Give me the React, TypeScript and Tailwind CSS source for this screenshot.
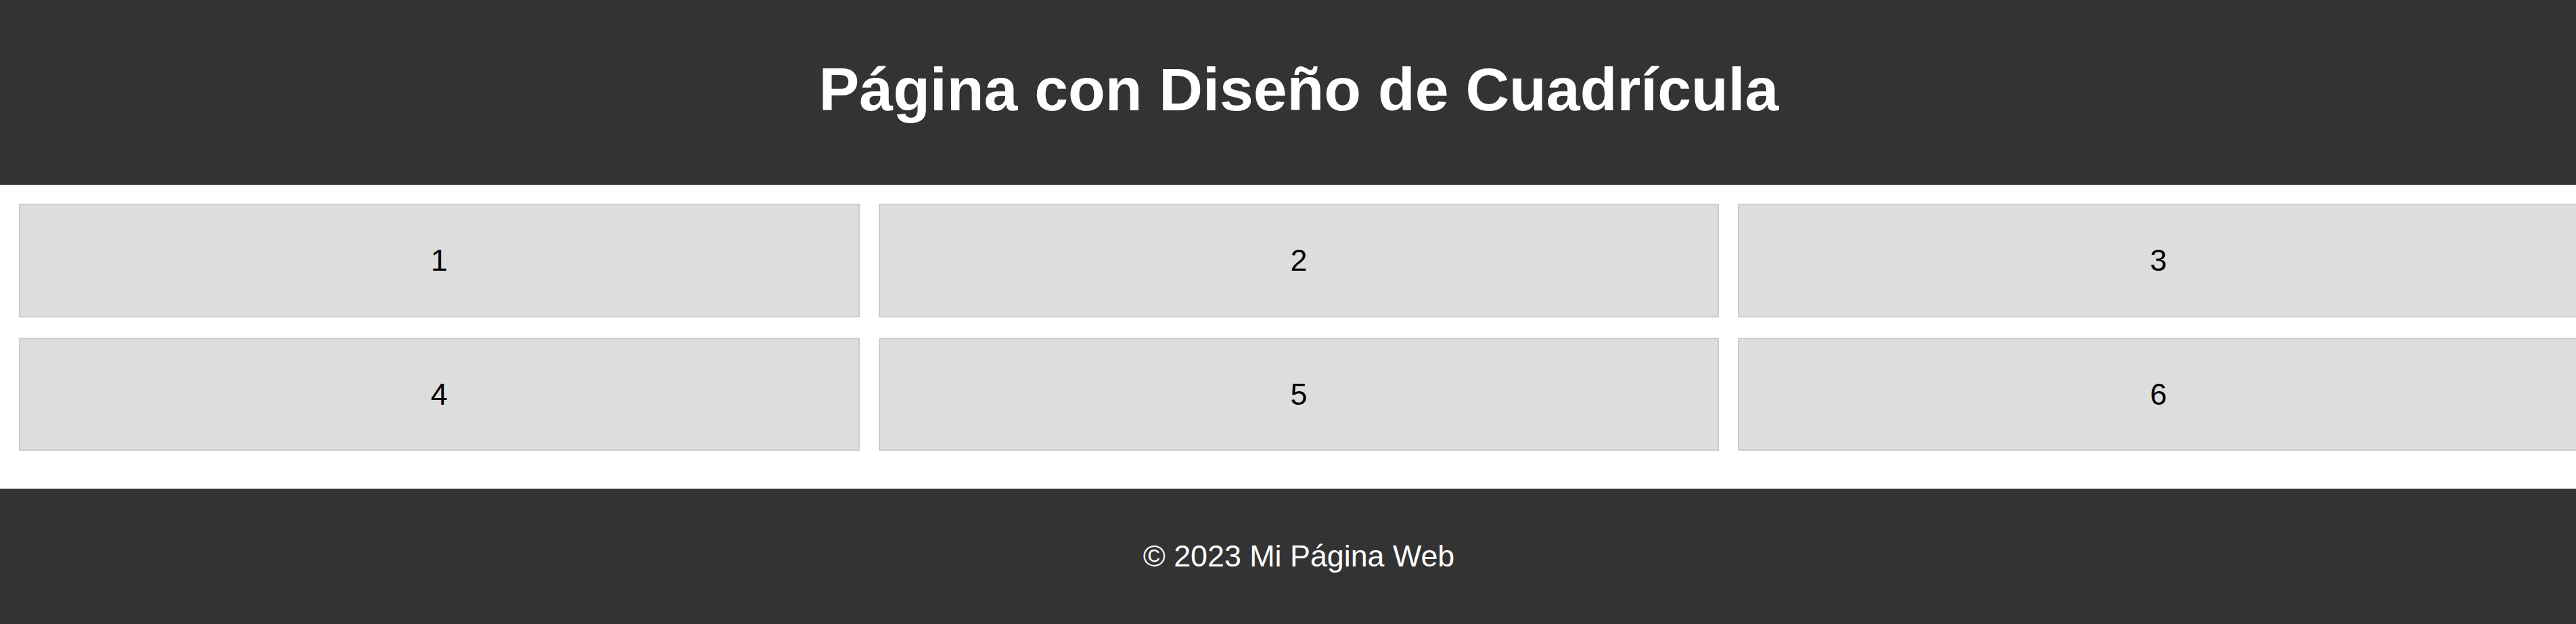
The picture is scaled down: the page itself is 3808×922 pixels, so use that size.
export default function App() {
  const items = [1, 2, 3, 4, 5, 6];
  return (
    <div className="w-full overflow-hidden bg-white" style={{ fontFamily: '"Liberation Sans", Arial, sans-serif' }}>
      <div className="w-[3840px]">
        <header className="h-[273px] bg-[#333333] pt-[87px] text-center text-white">
          <h1 className="text-[89.6px] font-bold leading-[90px]">Página con Diseño de Cuadrícula</h1>
        </header>
        <main className="px-[28px] pt-[28px] pb-[56px]">
          <div className="grid grid-cols-3 gap-x-[28px] gap-y-[30px]">
            {items.map((n) => (
              <div
                key={n}
                className="h-[167.5px] border-2 border-[#cccccc] bg-[#dddddd] pt-[56px] text-center text-[44.8px] leading-[51.5px] text-black"
              >
                {n}
              </div>
            ))}
          </div>
        </main>
        <footer className="h-[201px] bg-[#333333] pt-[74px] text-center text-[44.8px] leading-[51.5px] text-white">
          © 2023 Mi Página Web
        </footer>
      </div>
    </div>
  );
}
